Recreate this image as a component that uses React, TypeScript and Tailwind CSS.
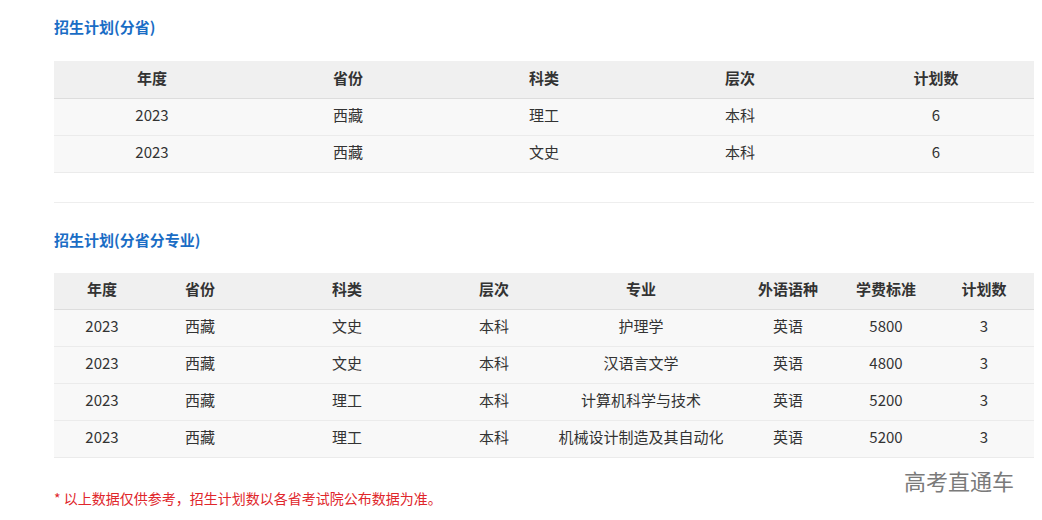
import React from 'react';

const font = { fontFamily: '"Microsoft YaHei", "Noto Sans CJK SC", "Noto Sans", sans-serif' };

const plan1 = [
  { year: '2023', prov: '西藏', kind: '理工', level: '本科', num: '6' },
  { year: '2023', prov: '西藏', kind: '文史', level: '本科', num: '6' },
];

const plan2 = [
  { year: '2023', prov: '西藏', kind: '文史', level: '本科', major: '护理学', lang: '英语', fee: '5800', num: '3' },
  { year: '2023', prov: '西藏', kind: '文史', level: '本科', major: '汉语言文学', lang: '英语', fee: '4800', num: '3' },
  { year: '2023', prov: '西藏', kind: '理工', level: '本科', major: '计算机科学与技术', lang: '英语', fee: '5200', num: '3' },
  { year: '2023', prov: '西藏', kind: '理工', level: '本科', major: '机械设计制造及其自动化', lang: '英语', fee: '5200', num: '3' },
];

function Title({ children }: { children: React.ReactNode }) {
  return <h3 className="text-[15px] leading-[20px] font-bold text-[#1a6dc5]">{children}</h3>;
}

export default function App() {
  const cols2 = ['w-[96px]', 'w-[100px]', 'w-[194px]', 'w-[100px]', 'w-[194px]', 'w-[100px]', 'w-[96px]', 'w-[100px]'];
  const heads2 = ['年度', '省份', '科类', '层次', '专业', '外语语种', '学费标准', '计划数'];
  const cell = 'text-center pb-[3px]';

  return (
    <div className="relative w-[1042px] h-[520px] bg-white text-[#333] pl-[54px] pr-[8px] pt-[17px]" style={font}>
      <Title>招生计划(分省)</Title>

      <table className="mt-[24px] w-[980px] table-fixed border-collapse text-[15px]">
        <thead>
          <tr className="bg-[#f0f0f0] h-[37px] border-b border-[#dddddd]">
            {['年度', '省份', '科类', '层次', '计划数'].map((h) => (
              <th key={h} className={`font-bold ${cell}`}>{h}</th>
            ))}
          </tr>
        </thead>
        <tbody>
          {plan1.map((r, i) => (
            <tr key={i} className="bg-[#f8f8f8] h-[37px] border-b border-[#ebebeb]">
              <td className={cell}>{r.year}</td>
              <td className={cell}>{r.prov}</td>
              <td className={cell}>{r.kind}</td>
              <td className={cell}>{r.level}</td>
              <td className={cell}>{r.num}</td>
            </tr>
          ))}
        </tbody>
      </table>

      <div className="mt-[29px] w-[980px] border-t border-[#eeeeee]" />

      <div className="mt-[27px]">
        <Title>招生计划(分省分专业)</Title>
      </div>

      <table className="mt-[23px] w-[980px] table-fixed border-collapse text-[15px]">
        <colgroup>
          {cols2.map((c, i) => (
            <col key={i} className={c} />
          ))}
        </colgroup>
        <thead>
          <tr className="bg-[#f0f0f0] h-[37px] border-b border-[#dddddd]">
            {heads2.map((h) => (
              <th key={h} className={`font-bold ${cell}`}>{h}</th>
            ))}
          </tr>
        </thead>
        <tbody>
          {plan2.map((r, i) => (
            <tr key={i} className="bg-[#f8f8f8] h-[37px] border-b border-[#ebebeb]">
              <td className={cell}>{r.year}</td>
              <td className={cell}>{r.prov}</td>
              <td className={cell}>{r.kind}</td>
              <td className={cell}>{r.level}</td>
              <td className={cell}>{r.major}</td>
              <td className={cell}>{r.lang}</td>
              <td className={cell}>{r.fee}</td>
              <td className={cell}>{r.num}</td>
            </tr>
          ))}
        </tbody>
      </table>

      <p className="mt-[30px] text-[14px] leading-[20px] text-[#e0262b]">* 以上数据仅供参考，招生计划数以各省考试院公布数据为准。</p>

      <div className="absolute left-[904px] top-[466px] text-[22px] leading-[28px] text-[#7a7a7a]">高考直通车</div>
    </div>
  );
}
